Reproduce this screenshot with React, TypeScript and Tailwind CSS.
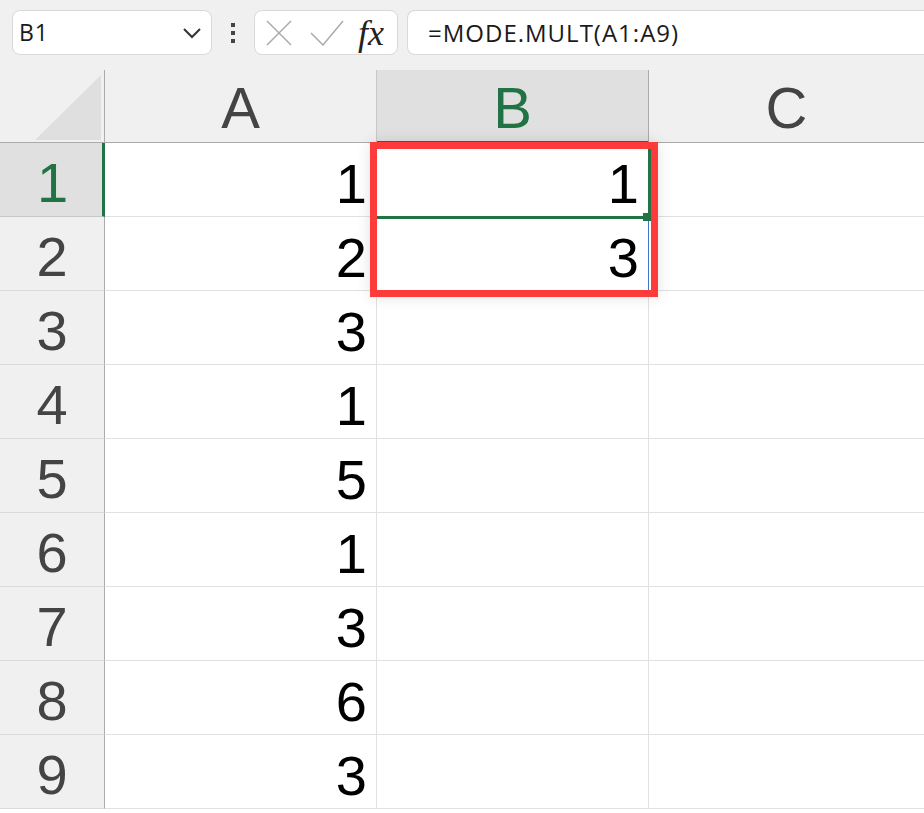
import React from "react";

const rows = [1, 2, 3, 1, 5, 1, 3, 6, 3];
const bVals: Record<number, string> = { 0: "1", 1: "3" };

export default function App() {
  return (
    <div className="w-[924px] h-[813px] overflow-hidden bg-white font-['Liberation_Sans',sans-serif]">
      {/* formula bar */}
      <div className="flex h-[70px] items-start bg-[#f0f0f0] pl-[12px] pt-[10px]">
        <div className="flex h-[45px] w-[200px] items-center justify-between rounded-[8px] border border-[#d9d9d9] bg-white pl-[6px] pr-[9px]">
          <span className="font-['Open_Sans',sans-serif] text-[23px] tracking-[0.8px] text-[#1a1a1a]">B1</span>
          <svg width="20" height="12" viewBox="0 0 20 12">
            <path d="M2 2 L10 10 L18 2" fill="none" stroke="#333" strokeWidth="2" />
          </svg>
        </div>
        <div className="flex h-[45px] w-[42px] flex-col items-center justify-center gap-[4px]">
          <div className="h-[4px] w-[4px] bg-[#444]" />
          <div className="h-[4px] w-[4px] bg-[#444]" />
          <div className="h-[4px] w-[4px] bg-[#444]" />
        </div>
        <div className="flex h-[45px] w-[144px] items-center rounded-[8px] border border-[#d9d9d9] bg-white pl-[11px]">
          <svg width="26" height="26" viewBox="0 0 26 26">
            <path d="M1 1 L25 25 M25 1 L1 25" stroke="#ababab" strokeWidth="1.5" fill="none" />
          </svg>
          <svg width="34" height="26" viewBox="0 0 34 26" className="ml-[18px]">
            <path d="M1 13 L13 25 L33 1" stroke="#ababab" strokeWidth="1.5" fill="none" />
          </svg>
          <span className="ml-[14px] font-['Liberation_Serif',serif] text-[36px] italic leading-none text-[#222]">fx</span>
        </div>
        <div className="ml-[9px] flex h-[45px] flex-1 items-center rounded-l-[8px] border border-r-0 border-[#d9d9d9] bg-white pl-[20px]">
          <span className="font-['Open_Sans',sans-serif] text-[24px] tracking-[1px] text-[#1a1a1a]">=MODE.MULT(A1:A9)</span>
        </div>
      </div>

      {/* grid */}
      <div className="relative">
        <div className="flex h-[73px] bg-[#f0f0f0]">
          <div className="relative h-full w-[105px] border-r border-b border-[#ababab]">
            <svg className="absolute left-0 top-0" width="104" height="72" viewBox="0 0 104 72">
              <polygon points="35,70 101,5 101,70" fill="#dfdfdf" />
            </svg>
          </div>
          <div className="flex h-full w-[272px] items-center justify-center border-r border-b border-r-[#c8c8c8] border-b-[#ababab] pt-[4px] text-[58px] leading-none text-[#444]">
            A
          </div>
          <div className="flex h-full w-[272px] items-center justify-center border-r border-r-[#ababab] border-b-[2px] border-b-[#217346] bg-[#e0e0e0] pt-[4px] text-[58px] leading-none text-[#217346]">
            B
          </div>
          <div className="flex h-full flex-1 items-center justify-center border-b border-[#ababab] pt-[4px] text-[58px] leading-none text-[#444]">
            C
          </div>
        </div>
        {rows.map((v, i) => (
          <div key={i} className="flex h-[74px]">
            <div
              className={
                i === 0
                  ? "flex h-full w-[105px] items-center justify-center border-r-[3px] border-b border-r-[#217346] border-b-[#c8c8c8] bg-[#e0e0e0] pl-[3px] pt-[6px] text-[56px] leading-none text-[#217346]"
                  : "flex h-full w-[105px] items-center justify-center border-r border-b border-r-[#ababab] border-b-[#dadada] bg-[#f0f0f0] pt-[6px] text-[56px] leading-none text-[#444]"
              }
            >
              {i + 1}
            </div>
            <div className="flex h-full w-[272px] items-end justify-end border-r border-b border-[#e1e1e1] pb-[4px] pr-[9px] text-[56px] leading-none text-black">
              {v}
            </div>
            <div className="flex h-full w-[272px] items-end justify-end border-r border-b border-[#e1e1e1] pb-[4px] pr-[9px] text-[56px] leading-none text-black">
              {bVals[i] ?? ""}
            </div>
            <div className="h-full flex-1 border-b border-[#e1e1e1]" />
          </div>
        ))}

        {/* selection overlays */}
        <div className="absolute left-[648px] top-[73px] h-[70px] w-[3px] bg-[#217346]" />
        <div className="absolute left-[377px] top-[146px] h-[3px] w-[268px] bg-[#217346]" />
        <div className="absolute left-[648px] top-[150px] h-[70px] w-[1px] bg-[#4472c4]" />
        <div className="absolute left-[643px] top-[143px] h-[8px] w-[9px] bg-[#217346]" />
        <div className="absolute left-[370px] top-[72px] h-[155px] w-[288px] border-[7px] border-[#fd3b3b] shadow-[0_0_14px_rgba(0,0,0,0.12)]" />
      </div>
    </div>
  );
}
